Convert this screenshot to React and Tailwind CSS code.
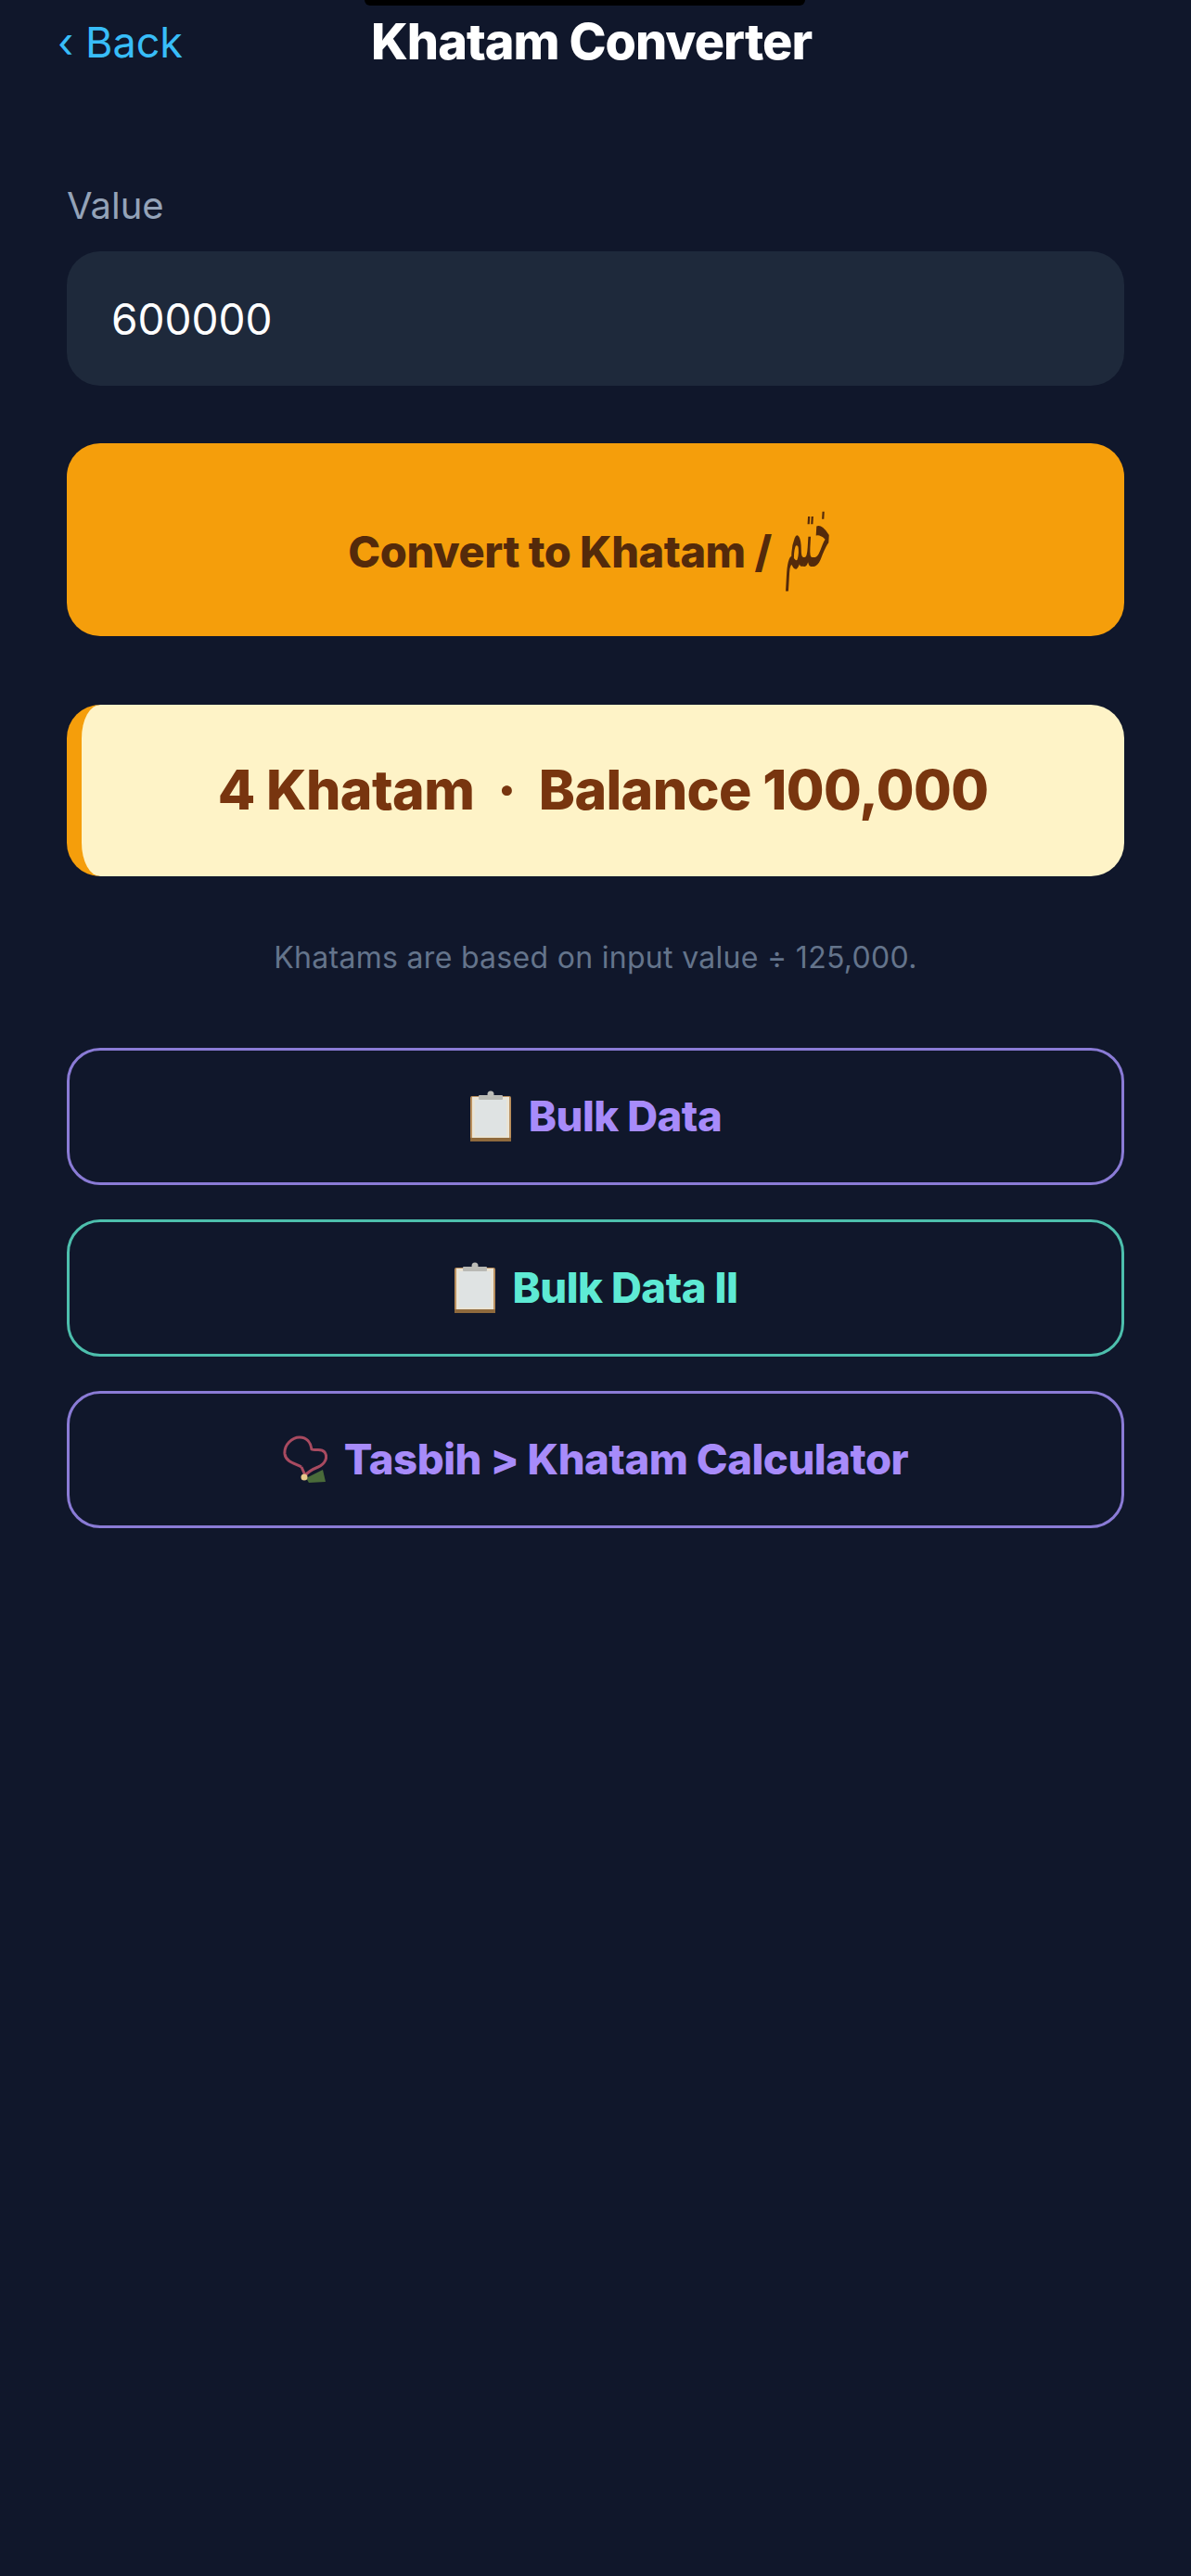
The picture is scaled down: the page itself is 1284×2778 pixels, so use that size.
import { useState } from "react";

const ClipboardIcon = () => (
    <svg width="46" height="56" viewBox="0 0 46 56" className="shrink-0">
        <rect x="1" y="6" width="44" height="49" rx="2" fill="#b98f5e" />
        <rect x="3" y="7" width="40" height="44" fill="#e9e4d6" />
        <rect x="6" y="10" width="34" height="39" fill="#dfe3e3" />
        <rect x="10" y="5" width="26" height="5" rx="1" fill="#b9b9b4" />
        <circle cx="23" cy="4" r="3.5" fill="#bdbdb8" />
        <rect x="1" y="51" width="44" height="4" fill="#8f6a3d" />
    </svg>
);

const BeadsIcon = () => (
    <svg width="48" height="52" viewBox="0 0 48 52" className="shrink-0">
        <path
            d="M20 34 C12 30 3 28 2 20 C1 10 10 2 18 2 C26 2 30 8 31 15 C35 17 41 13 45 18 C49 24 45 31 38 34 C33 36 28 38 23 44 M20 34 L24 43"
            fill="none"
            stroke="#a84a60"
            strokeWidth="3"
        />
        <path d="M25 46 L43 37 L46 50 L28 51 Z" fill="#4a6b3a" />
        <circle cx="23" cy="45" r="3.5" fill="#e8c98a" />
    </svg>
);

const LinkButton = ({ icon, label, className }) => (
    <button
        type="button"
        className={`flex items-center justify-center gap-[18px] w-full h-[148px] border-[3px] rounded-[36px] text-[45.5px] font-extrabold tracking-[-0.5px] ${className}`}
    >
        {icon}
        {label}
    </button>
);

const App = () => {
    const [value, setValue] = useState("600000");

    return (
        <div className="relative min-h-screen pt-[22px] bg-[#10172b] font-['Inter','Liberation_Sans',sans-serif]">
            {/* Notch */}
            <div className="absolute top-0 left-[393px] w-[475px] h-[6px] bg-black rounded-b-[14px]"></div>

            {/* Header */}
            <div className="flex items-center justify-between h-[46px] pl-[62px] pr-[60px]">
                <button type="button" className="text-[45px] leading-none text-[#38bdf8]">
                    ‹ Back
                </button>
                <h1 className="text-[54px] leading-none font-extrabold tracking-[-1px] text-white">
                    Khatam Converter
                </h1>
                <div className="w-[146px]"></div>
            </div>

            <div className="flex flex-col px-[72px] pt-[128px]">
                {/* Value */}
                <label className="mb-[24px] text-[40px] leading-[51px] text-[#94a3b8]">
                    Value
                </label>
                <input
                    type="text"
                    value={value}
                    onChange={(e) => setValue(e.target.value)}
                    className="w-full h-[145px] px-[48px] text-[46px] text-white bg-[#1e293b] rounded-[36px] outline-none"
                />

                {/* Convert */}
                <button
                    type="button"
                    className="flex items-center justify-center gap-[4px] w-full h-[208px] mt-[62px] pt-[26px] text-[47px] font-extrabold tracking-[-0.5px] text-[#542a0b] bg-[#f59e0b] rounded-[36px]"
                >
                    Convert to Khatam /
                    <span className="inline-block -translate-y-[22px] font-['DejaVu_Sans',serif] font-normal text-[46px] scale-x-[0.65] scale-y-[2.4] -skew-x-12">
                        ختم
                    </span>
                </button>

                {/* Result */}
                <div className="flex items-center justify-center w-full h-[185px] mt-[74px] border-l-[16px] border-[#f59e0b] rounded-[36px] bg-[#fef3c7]">
                    <span className="text-[59px] font-extrabold tracking-[-0.6px] whitespace-pre text-[#78350f]">
                        4 Khatam  ·  Balance 100,000
                    </span>
                </div>

                <p className="mt-[68px] text-[32px] leading-[40px] tracking-[0.3px] text-center text-[#64748b]">
                    Khatams are based on input value ÷ 125,000.
                </p>

                {/* Links */}
                <div className="flex flex-col gap-[37px] mt-[77px]">
                    <LinkButton
                        icon={<ClipboardIcon />}
                        label="Bulk Data"
                        className="border-[#8a7bd6] text-[#a78bfa]"
                    />
                    <LinkButton
                        icon={<ClipboardIcon />}
                        label="Bulk Data II"
                        className="border-[#4dbfad] text-[#5eead4]"
                    />
                    <LinkButton
                        icon={<BeadsIcon />}
                        label="Tasbih > Khatam Calculator"
                        className="border-[#8a7bd6] text-[#a78bfa]"
                    />
                </div>
            </div>
        </div>
    );
};

export default App;
